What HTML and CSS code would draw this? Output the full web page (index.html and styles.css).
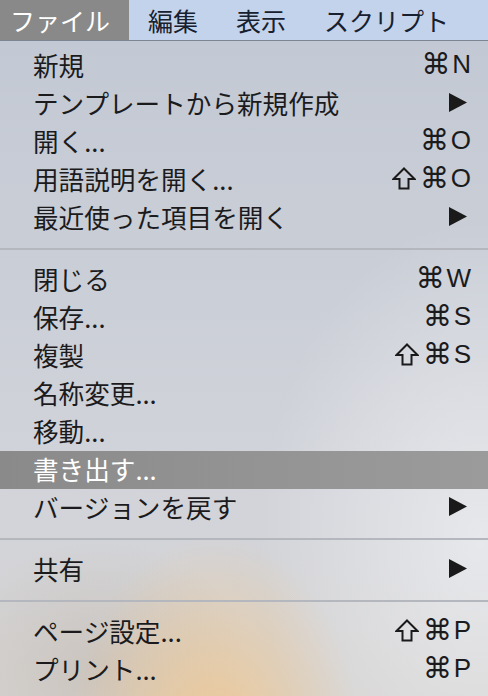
FILE: index.html
```html
<!DOCTYPE html>
<html lang="ja">
<head>
<meta charset="utf-8">
<title>ファイル メニュー</title>
<link rel="stylesheet" href="styles.css">
</head>
<body>
<div class="screen">
  <nav class="menubar">
    <span class="mb-item active">ファイル</span>
    <span class="mb-item">編集</span>
    <span class="mb-item">表示</span>
    <span class="mb-item">スクリプト</span>
  </nav>
  <div class="menu">
    <div class="row"><span class="label">新規</span><span class="key"><span class="cmd">⌘</span>N</span></div>
    <div class="row"><span class="label">テンプレートから新規作成</span><span class="sub"><svg viewBox="0 0 18 19" width="18" height="19"><path d="M0 0 L18 9.5 L0 19 Z" fill="#1a1a1a"/></svg></span></div>
    <div class="row"><span class="label">開く...</span><span class="key"><span class="cmd">⌘</span>O</span></div>
    <div class="row"><span class="label">用語説明を開く...</span><span class="key"><svg class="shift" viewBox="0 0 24 23" width="24" height="23"><path d="M12 1.5 L22.5 12 L16.5 12 L16.5 21.5 L7.5 21.5 L7.5 12 L1.5 12 Z" fill="none" stroke="#1a1a1a" stroke-width="2" stroke-linejoin="miter"/></svg><span class="cmd">⌘</span>O</span></div>
    <div class="row"><span class="label">最近使った項目を開く</span><span class="sub"><svg viewBox="0 0 18 19" width="18" height="19"><path d="M0 0 L18 9.5 L0 19 Z" fill="#1a1a1a"/></svg></span></div>
    <div class="sep"></div>
    <div class="row"><span class="label">閉じる</span><span class="key"><span class="cmd">⌘</span>W</span></div>
    <div class="row"><span class="label">保存...</span><span class="key"><span class="cmd">⌘</span>S</span></div>
    <div class="row"><span class="label">複製</span><span class="key"><svg class="shift" viewBox="0 0 24 23" width="24" height="23"><path d="M12 1.5 L22.5 12 L16.5 12 L16.5 21.5 L7.5 21.5 L7.5 12 L1.5 12 Z" fill="none" stroke="#1a1a1a" stroke-width="2" stroke-linejoin="miter"/></svg><span class="cmd">⌘</span>S</span></div>
    <div class="row"><span class="label">名称変更...</span></div>
    <div class="row"><span class="label">移動...</span></div>
    <div class="row selected"><span class="label">書き出す...</span></div>
    <div class="row"><span class="label">バージョンを戻す</span><span class="sub"><svg viewBox="0 0 18 19" width="18" height="19"><path d="M0 0 L18 9.5 L0 19 Z" fill="#1a1a1a"/></svg></span></div>
    <div class="sep"></div>
    <div class="row"><span class="label">共有</span><span class="sub"><svg viewBox="0 0 18 19" width="18" height="19"><path d="M0 0 L18 9.5 L0 19 Z" fill="#1a1a1a"/></svg></span></div>
    <div class="sep"></div>
    <div class="row"><span class="label">ページ設定...</span><span class="key"><svg class="shift" viewBox="0 0 24 23" width="24" height="23"><path d="M12 1.5 L22.5 12 L16.5 12 L16.5 21.5 L7.5 21.5 L7.5 12 L1.5 12 Z" fill="none" stroke="#1a1a1a" stroke-width="2" stroke-linejoin="miter"/></svg><span class="cmd">⌘</span>P</span></div>
    <div class="row"><span class="label">プリント...</span><span class="key"><span class="cmd">⌘</span>P</span></div>
  </div>
</div>
</body>
</html>
```
FILE: styles.css
```css
html, body {
  margin: 0;
  padding: 0;
}
body {
  width: 488px;
  height: 696px;
  overflow: hidden;
  font-family: "Noto Sans CJK JP", "Noto Sans", sans-serif;
  color: #1b1b1d;
}
.screen {
  display: flex;
  flex-direction: column;
  height: 696px;
}
.menubar {
  display: flex;
  height: 40px;
  background: #c3d3eb;
  border-bottom: 1px solid #7c8594;
  margin-left: -9px;
  font-size: 25px;
  color: #16202e;
}
.mb-item {
  display: flex;
  align-items: center;
  padding: 0 19px;
  line-height: 40px;
}
.mb-item.active {
  background: #898989;
  color: #ffffff;
}
.menu {
  flex: 1;
  padding-top: 6px;
  background:
    radial-gradient(ellipse 145px 210px at 215px 705px, rgba(240, 200, 146, 0.97), rgba(240, 200, 146, 0) 100%),
    radial-gradient(ellipse 150px 130px at 100px 630px, rgba(196, 186, 176, 0.6), rgba(196, 186, 176, 0) 100%),
    radial-gradient(ellipse 220px 320px at 480px 500px, rgba(233, 234, 237, 0.9), rgba(233, 234, 237, 0) 100%),
    linear-gradient(180deg, #c3c9d4 0%, #cbcfd7 40%, #d2d4da 70%, #d5d3d1 100%);
}
.row {
  box-sizing: border-box;
  display: flex;
  align-items: center;
  height: 38px;
  padding: 0 17px 3px 33px;
  font-size: 25.6px;
}
.row .label {
  flex: 1;
  white-space: nowrap;
}
.row.selected {
  background: linear-gradient(90deg, #8a8a8a 0%, #939393 50%, #9b9b9b 100%);
  color: #ffffff;
}
.key {
  display: flex;
  align-items: center;
  font-family: "Liberation Sans", "DejaVu Sans", sans-serif;
  font-size: 26px;
  color: #1b1b1d;
}
.shift {
  display: block;
  margin-right: 4px;
}
.cmd {
  font-family: "DejaVu Sans", sans-serif;
  font-size: 29px;
  line-height: 1;
  margin-right: 2px;
}
.sub {
  display: flex;
  align-items: center;
  margin-right: 4px;
}
.sep {
  height: 2px;
  margin: 11px 0 11px;
  background: #b4b7bd;
}
```
